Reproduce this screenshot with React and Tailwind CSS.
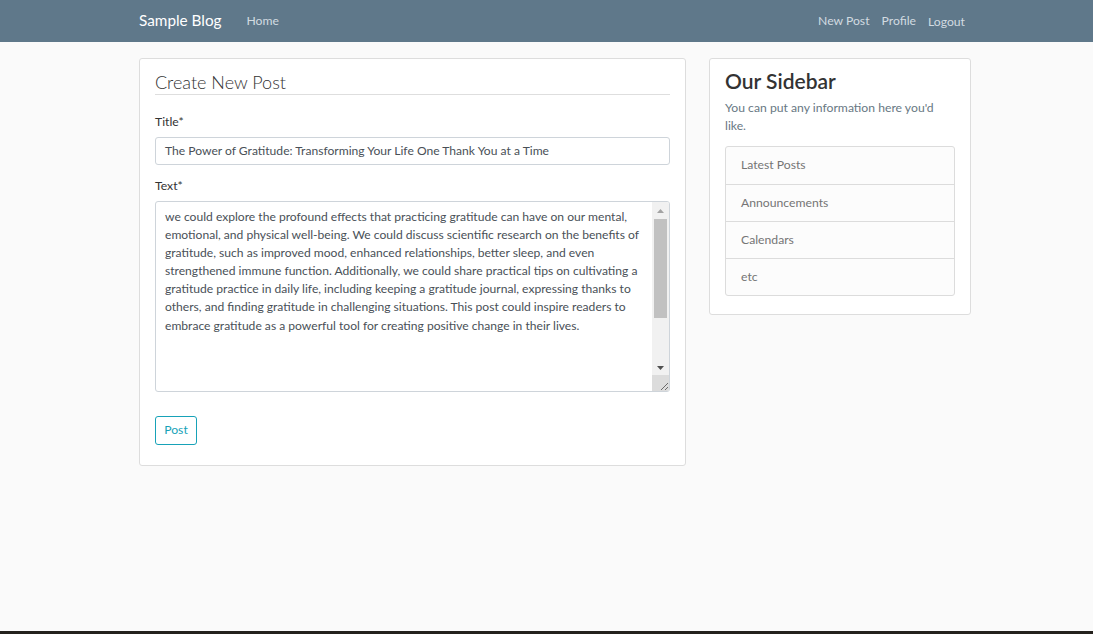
import React from "react";

const lines = [
  "we could explore the profound effects that practicing gratitude can have on our mental,",
  "emotional, and physical well-being. We could discuss scientific research on the benefits of",
  "gratitude, such as improved mood, enhanced relationships, better sleep, and even",
  "strengthened immune function. Additionally, we could share practical tips on cultivating a",
  "gratitude practice in daily life, including keeping a gratitude journal, expressing thanks to",
  "others, and finding gratitude in challenging situations. This post could inspire readers to",
  "embrace gratitude as a powerful tool for creating positive change in their lives.",
];

const items = ["Latest Posts", "Announcements", "Calendars", "etc"];

export default function App() {
  return (
    <div className="min-h-[634px] bg-[#fafafa] flex flex-col font-['Lato','Open_Sans',sans-serif] text-[#333]">
      <header className="h-[42px] bg-[#5f788a] flex items-center pl-[139px] pr-[128px] shrink-0">
        <div className="flex-1 flex items-center justify-between">
          <div className="flex items-center">
            <span className="text-white text-[15.3px] leading-none">Sample Blog</span>
            <span className="ml-[25px] text-[#d2dbe1] text-[12.2px]">Home</span>
          </div>
          <div className="flex items-center gap-[12px] text-[#d2dbe1] text-[12.2px]">
            <span>New Post</span>
            <span>Profile</span>
            <span className="pt-[2px]">Logout</span>
          </div>
        </div>
      </header>

      <main className="flex-1 flex items-start gap-[23px] pl-[139px] pt-[16px]">
        <section className="w-[547px] bg-white border border-[#dddddd] rounded-[3px] px-[15px] pt-[11px] pb-[20px]">
          <div className="text-[18px] leading-[24px] font-light border-b border-[#dedede] text-[#333]">
            Create New Post
          </div>
          <div className="mt-[18px] text-[12.2px] leading-[18px]">Title*</div>
          <div className="mt-[6px] h-[28px] border border-[#ced4da] rounded-[3px] flex items-center px-[9px] text-[12.1px] text-[#495057] whitespace-nowrap overflow-hidden">
            The Power of Gratitude: Transforming Your Life One Thank You at a Time
          </div>
          <div className="mt-[12px] text-[12.2px] leading-[18px]">Text*</div>
          <div className="mt-[6px] h-[191px] border border-[#ced4da] rounded-[3px] flex overflow-hidden">
            <div className="flex-1 pl-[9px] pt-[6px] text-[12.1px] leading-[18.1px] text-[#495057] overflow-hidden">
              {lines.map((l, i) => (
                <div key={i} className="whitespace-nowrap">{l}</div>
              ))}
            </div>
            <div className="w-[17px] flex flex-col bg-[#f1f1f1]">
              <div className="h-[17px] flex items-center justify-center">
                <svg width="7" height="4" viewBox="0 0 7 4"><path d="M3.5 0 L7 4 L0 4 Z" fill="#a3a3a3" /></svg>
              </div>
              <div className="mx-[2px] h-[99px] bg-[#c1c1c1]" />
              <div className="flex-1 flex items-end justify-center pb-[5px]">
                <svg width="7" height="4" viewBox="0 0 7 4"><path d="M0 0 L7 0 L3.5 4 Z" fill="#505050" /></svg>
              </div>
              <div className="h-[16px] bg-[#dcdcdc] flex items-end justify-end">
                <svg width="12" height="12" viewBox="0 0 12 12">
                  <path d="M11 4 L4 11 M11 8 L8 11" stroke="#6b6b6b" strokeWidth="1" />
                </svg>
              </div>
            </div>
          </div>
          <button className="mt-[24px] h-[29px] w-[42px] border border-[#17a2b8] rounded-[3px] text-[#17a2b8] text-[12.2px] bg-white">
            Post
          </button>
        </section>

        <aside className="w-[262px] bg-white border border-[#dddddd] rounded-[3px] px-[15px] pt-[8px] pb-[18px]">
          <div className="text-[21px] leading-[28px] font-semibold text-[#333]">Our Sidebar</div>
          <p className="mt-[4px] text-[12.2px] leading-[18px] text-[#687883]">
            You can put any information here you'd
            <br />
            like.
          </p>
          <ul className="mt-[11px] border border-[#dcdcdc] rounded-[3px] bg-[#fcfcfc]">
            {items.map((it, i) => (
              <li
                key={it}
                className={`h-[37px] flex items-center px-[15px] text-[12.2px] text-[#757575] ${i > 0 ? "border-t border-[#dcdcdc]" : ""}`}
              >
                {it}
              </li>
            ))}
          </ul>
        </aside>
      </main>
      <div className="h-[3px] bg-[#24211d] shrink-0" />
    </div>
  );
}
